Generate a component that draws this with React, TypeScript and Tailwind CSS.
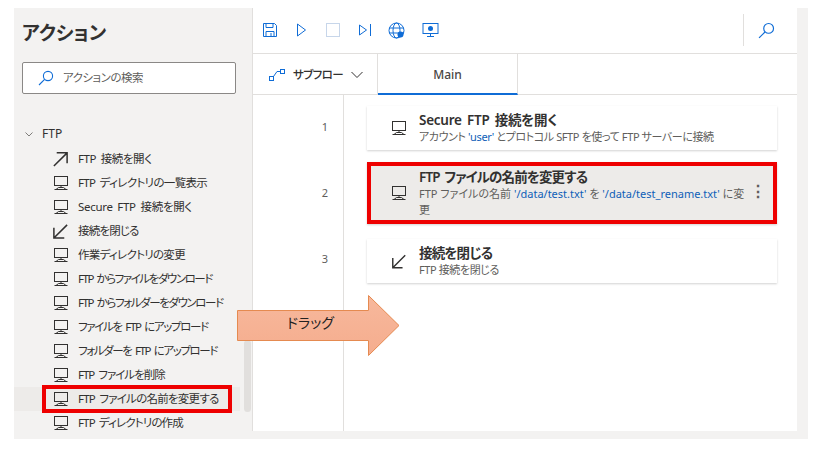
import React from 'react';

const fontStack = 'font-["Noto_Sans","Noto_Sans_CJK_JP",sans-serif] [font-feature-settings:"palt"]';

function PcIcon() {
  return (
    <svg width="16" height="16" viewBox="0 0 16 16" fill="none" stroke="#323130" strokeWidth="1">
      <rect x="1.5" y="1.5" width="13" height="9" />
      <path d="M8 10.5v1.5M5.5 12.5h5L13 14.5H3zM1.5 14.5h13" />
    </svg>
  );
}

function OpenIcon() {
  return (
    <svg width="18" height="18" viewBox="0 0 18 18" fill="none" stroke="#323130" strokeWidth="1.6">
      <path d="M2 16.5L16 2.5M5 2.5h11v11" />
    </svg>
  );
}

function CloseIcon() {
  return (
    <svg width="18" height="18" viewBox="0 0 18 18" fill="none" stroke="#323130" strokeWidth="1.6">
      <path d="M16 2.5L2 16.5M2 5.5v11h11" />
    </svg>
  );
}

function SearchIcon({ size = 16 }: { size?: number }) {
  return (
    <svg width={size} height={size} viewBox="0 0 16 16" fill="none" stroke="#0f6cd6" strokeWidth="1.1">
      <circle cx="10" cy="6" r="4.6" />
      <path d="M6.6 9.4L1 15" />
    </svg>
  );
}

const actions = [
  { icon: 'open', label: 'FTP 接続を開く', tracking: 'tracking-[-0.4px]' },
  { icon: 'pc', label: 'FTP ディレクトリの一覧表示', tracking: 'tracking-[-0.65px]' },
  { icon: 'pc', label: 'Secure FTP 接続を開く', tracking: 'tracking-[-0.3px]' },
  { icon: 'close', label: '接続を閉じる', tracking: 'tracking-[-0.8px]' },
  { icon: 'pc', label: '作業ディレクトリの変更', tracking: 'tracking-[-0.7px]' },
  { icon: 'pc', label: 'FTP からファイルをダウンロード', tracking: 'tracking-[-1.45px]' },
  { icon: 'pc', label: 'FTP からフォルダーをダウンロード', tracking: 'tracking-[-1.4px]' },
  { icon: 'pc', label: 'ファイルを FTP にアップロード', tracking: 'tracking-[-1.35px]' },
  { icon: 'pc', label: 'フォルダーを FTP にアップロード', tracking: 'tracking-[-1.4px]' },
  { icon: 'pc', label: 'FTP ファイルを削除', tracking: 'tracking-[-1px]' },
  { icon: 'pc', label: 'FTP ファイルの名前を変更する', tracking: 'tracking-[-0.75px]' },
  { icon: 'pc', label: 'FTP ディレクトリの作成', tracking: 'tracking-[-0.85px]' },
];

function ActionIcon({ icon }: { icon: string }) {
  if (icon === 'open') return <OpenIcon />;
  if (icon === 'close') return <CloseIcon />;
  return <PcIcon />;
}

function Sidebar() {
  return (
    <aside className="relative flex flex-col w-[239px] h-full overflow-hidden bg-[#f3f2f1] border-r border-[#e1dfdd]">
      <h1 className="shrink-0 pl-2 pt-[11px] h-[54px] text-[19px] leading-[28px] font-semibold text-[#323130]">アクション</h1>
      <div className="shrink-0 flex items-center gap-[9px] ml-2 pl-[15px] w-[214px] h-[32px] bg-white border border-[#8a8886] rounded-[2px]">
        <SearchIcon />
        <span className="text-[11.5px] tracking-[-0.5px] text-[#605e5c]">アクションの検索</span>
      </div>
      <div className="shrink-0 flex items-center mt-[30px] ml-[11px] h-[20px] gap-[9px]">
        <svg width="8" height="8" viewBox="0 0 8 8" fill="none" stroke="#605e5c" strokeWidth="0.8">
          <path d="M0.5 2.5L4 6L7.5 2.5" />
        </svg>
        <span className="text-[12px] text-[#323130]">FTP</span>
      </div>
      <ul className="shrink-0 flex flex-col mt-[3px]">
        {actions.map((a, i) => (
          <li key={i} className={`flex items-center h-[24px] pl-[38px] gap-[9px] ${i === 10 ? 'w-[226px] bg-[#edebe9]' : ''}`}>
            <span className="flex justify-center w-[17px] shrink-0">
              <ActionIcon icon={a.icon} />
            </span>
            <span className={`text-[11.5px] [word-spacing:2px] text-[#323130] whitespace-nowrap ${a.tracking}`}>{a.label}</span>
          </li>
        ))}
      </ul>
      {/* スクロールバー */}
      <div className="absolute left-[230px] top-[332px] w-[7px] h-[72px] rounded bg-[#e1dfdd]" />
      {/* 赤枠 */}
      <div className="absolute left-[28px] top-[377px] w-[190px] h-[28px] border-[4px] border-[#ee0000]" />
    </aside>
  );
}

function Toolbar() {
  return (
    <div className="flex items-center h-[46px] pl-[9px] pr-[22px] pb-[1px] border-b border-[#e1dfdd]">
      <div className="flex items-center gap-[16px]">
        <svg width="16" height="16" viewBox="0 0 16 16" fill="none" stroke="#0f6cd6" strokeWidth="1">
          <path d="M1.5 1.5h11l2 2v11h-13zM4 1.5v4h7v-4M4 14.5v-5h8v5M9 11v3.5" />
        </svg>
        <svg width="15" height="16" viewBox="0 0 15 16" fill="none" stroke="#0f6cd6" strokeWidth="1">
          <path d="M3.5 2l8 6-8 6z" />
        </svg>
        <svg width="16" height="16" viewBox="0 0 16 16" fill="none" stroke="#c7d6ea" strokeWidth="1">
          <rect x="1.5" y="1.5" width="13" height="13" />
        </svg>
        <svg className="ml-[1px]" width="14" height="16" viewBox="0 0 14 16" fill="none" stroke="#0f6cd6" strokeWidth="1">
          <path d="M1.5 3l7 5-7 5zM12.5 2v12" />
        </svg>
        <svg width="17" height="17" viewBox="0 0 17 17" fill="none" stroke="#0f6cd6" strokeWidth="1">
          <circle cx="8.5" cy="8.5" r="7.5" />
          <ellipse cx="8.5" cy="8.5" rx="3.5" ry="7.5" />
          <path d="M1 6h15M1 11h15" />
          <circle cx="12.5" cy="12.5" r="3" fill="#0f6cd6" stroke="none" />
        </svg>
        <svg className="ml-[1px]" width="17" height="16" viewBox="0 0 17 16" fill="none" stroke="#0f6cd6" strokeWidth="1">
          <rect x="1" y="1.5" width="15" height="10" />
          <circle cx="8.5" cy="6.5" r="2.5" fill="#0f6cd6" stroke="none" />
          <path d="M8.5 11.5v3M5 14.5h7" />
        </svg>
      </div>
      <div className="flex items-center ml-auto h-[32px] border-l border-[#e1dfdd] pl-[14px]">
        <SearchIcon size={17} />
      </div>
    </div>
  );
}

function Tabs() {
  return (
    <div className="flex h-[41px] border-b border-[#e1dfdd]">
      <div className="flex items-center w-[125px] pl-[16px] pt-[2px] border-r border-[#e1dfdd]">
        <svg width="16" height="14" viewBox="0 0 16 14" fill="none" stroke="#0f6cd6" strokeWidth="1">
          <rect x="0.5" y="8.5" width="4" height="4" />
          <rect x="11.5" y="1.5" width="4" height="4" />
          <path d="M4.5 8.5L8 3.5h3.5" />
        </svg>
        <span className="ml-[8px] w-[50px] text-[11.5px] tracking-[-0.6px] font-medium text-[#323130] whitespace-nowrap">サブフロー</span>
        <svg className="ml-[8px]" width="12" height="8" viewBox="0 0 12 8" fill="none" stroke="#323130" strokeWidth="1">
          <path d="M0.5 1L6 6.5L11.5 1" />
        </svg>
      </div>
      <div className="flex items-center justify-center w-[140px] h-[41px] pt-[2px] border-r border-[#e1dfdd] border-b-2 border-b-[#0f6cd6]">
        <span className="text-[12px] font-medium text-[#484644]">Main</span>
      </div>
    </div>
  );
}

function Param({ children }: { children: React.ReactNode }) {
  return <span className="text-[#0f5fb8]">{children}</span>;
}

function FlowCard({
  icon,
  title,
  titleTracking,
  active,
  children,
}: {
  icon: string;
  title: string;
  titleTracking: string;
  active?: boolean;
  children: React.ReactNode;
}) {
  return (
    <div
      className={`relative flex items-center w-[410px] shadow-[0_1px_2px_rgba(0,0,0,0.18)] ${
        active ? 'h-[62px] bg-[#edebe9] border-[4px] border-[#ee0000]' : 'h-[44px] bg-white'
      }`}
    >
      <span className={`flex justify-center w-[16px] shrink-0 ${active ? 'ml-[20px]' : 'ml-[24px]'}`}>
        <ActionIcon icon={icon} />
      </span>
      <div className="ml-[12px] min-w-0">
        <div className={`text-[13.5px] leading-[17px] [word-spacing:2px] font-semibold text-[#323130] whitespace-nowrap ${titleTracking}`}>{title}</div>
        <div className={`text-[11px] leading-[16px] text-[#605e5c] ${active ? 'w-[330px]' : 'whitespace-nowrap tracking-[-0.4px]'}`}>{children}</div>
      </div>
      {active && <span className="absolute right-[7px] top-[15px] text-[16px] leading-[20px] font-bold text-[#605e5c]">⋮</span>}
    </div>
  );
}

function Canvas() {
  return (
    <div className="flex flex-1 min-h-0">
      <div className="relative w-[91px] h-full border-r border-[#e1dfdd] text-[11px] text-[#605e5c]">
        <span className="absolute right-[15px] top-[24px]">1</span>
        <span className="absolute right-[15px] top-[90px]">2</span>
        <span className="absolute right-[15px] top-[156px]">3</span>
      </div>
      <div className="flex flex-col pt-[11px] pl-[23px]">
        <FlowCard icon="pc" title="Secure FTP 接続を開く" titleTracking="tracking-[-0.25px]">
          アカウント <Param>'user'</Param> とプロトコル SFTP を使って FTP サーバーに接続
        </FlowCard>
        <div className="h-[12px]" />
        <FlowCard icon="pc" title="FTP ファイルの名前を変更する" titleTracking="tracking-[-0.85px]" active>
          FTP ファイルの名前 <Param>'/data/test.txt'</Param> を <Param>'/data/test_rename.txt'</Param> に変更
        </FlowCard>
        <div className="h-[15px]" />
        <FlowCard icon="close" title="接続を閉じる" titleTracking="tracking-[-0.8px]">
          FTP 接続を閉じる
        </FlowCard>
      </div>
    </div>
  );
}

function DragArrow() {
  return (
    <div className="absolute left-[237px] top-[295px] w-[163px] h-[61px]">
      <svg width="163" height="61" viewBox="0 0 163 61">
        <defs>
          <linearGradient id="arrowFill" x1="0" y1="0" x2="0" y2="1">
            <stop offset="0" stopColor="#f7b89c" />
            <stop offset="1" stopColor="#f5ad8e" />
          </linearGradient>
        </defs>
        <path d="M0.5 15.5H131.5V0.5L162 30.5L131.5 60.5V45.5H0.5Z" fill="url(#arrowFill)" stroke="#e58a50" strokeWidth="1" />
      </svg>
      <span className="absolute left-[50px] top-[18px] text-[14px] leading-[20px] text-[#222]">ドラッグ</span>
    </div>
  );
}

export default function App() {
  return (
    <div className={`relative w-[817px] h-[450px] overflow-hidden bg-white pt-2 pl-[14px] pr-[9px] pb-[11px] ${fontStack}`}>
      <div className="flex flex-col h-full bg-[#f3f2f1]">
        <div className="flex h-[423px]">
          <Sidebar />
          <main className="flex flex-col w-[544px] h-full bg-white">
            <Toolbar />
            <Tabs />
            <Canvas />
          </main>
        </div>
      </div>
      <DragArrow />
    </div>
  );
}
